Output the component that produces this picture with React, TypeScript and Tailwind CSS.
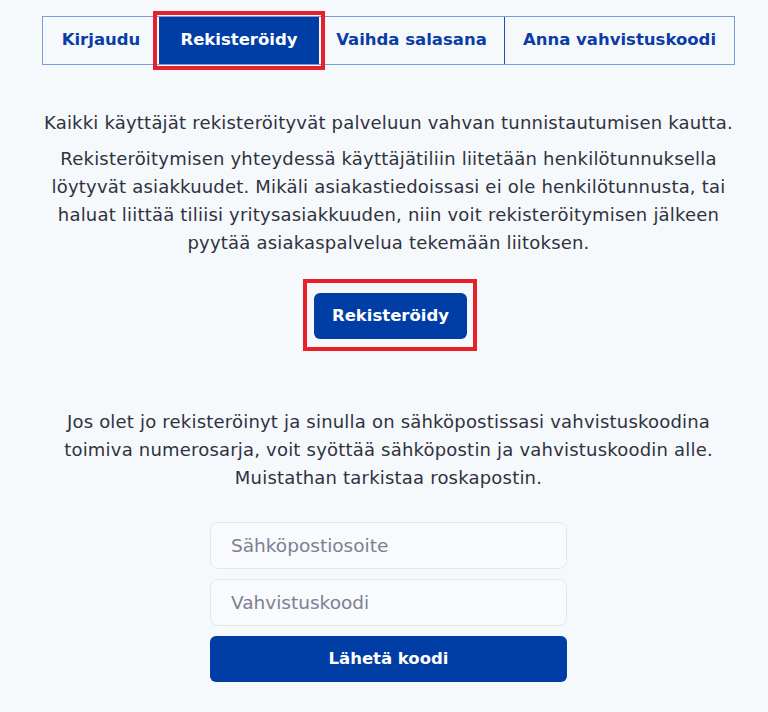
import React from "react";

const font = { fontFamily: '"DejaVu Sans", "Noto Sans", sans-serif' };

export default function App() {
  return (
    <div className="min-h-[712px] w-[768px] bg-[#f6f9fc] text-[#2f3240]" style={font}>
      <div className="flex flex-col items-center pl-[9px] pt-[16px]">
        <div className="flex h-[49px] w-[693px] border border-[#7d9ada]">
          <div className="flex w-[116px] items-center justify-center text-[16.5px] font-bold text-[#0b3da6]">
            Kirjaudu
          </div>
          <div className="flex w-[160px] items-center justify-center bg-[#003ea6] text-[16.5px] font-bold text-white outline-4 outline-offset-2 outline-[#e8202a]">
            Rekisteröidy
          </div>
          <div className="flex w-[186px] items-center justify-center border-r border-[#1f4fb8] text-[16.5px] font-bold text-[#0b3da6]">
            Vaihda salasana
          </div>
          <div className="flex flex-1 items-center justify-center text-[16.5px] font-bold text-[#0b3da6]">
            Anna vahvistuskoodi
          </div>
        </div>

        <p className="mt-[44px] text-center text-[18px] leading-[28px] tracking-[0.2px]">
          Kaikki käyttäjät rekisteröityvät palveluun vahvan tunnistautumisen kautta.
        </p>
        <p className="mt-[8px] text-center text-[18px] leading-[28px] tracking-[0.2px]">
          Rekisteröitymisen yhteydessä käyttäjätiliin liitetään henkilötunnuksella
          <br />
          löytyvät asiakkuudet. Mikäli asiakastiedoissasi ei ole henkilötunnusta, tai
          <br />
          haluat liittää tiliisi yritysasiakkuuden, niin voit rekisteröitymisen jälkeen
          <br />
          pyytää asiakaspalvelua tekemään liitoksen.
        </p>

        <div className="ml-[3px] mt-[22px] border-4 border-[#e8202a] pb-[8px] pl-[7px] pr-[6px] pt-[10px]">
          <button
            className="flex h-[46px] w-[153px] items-center justify-center rounded-[6px] bg-[#003ea6] text-[16.5px] font-bold text-white"
            style={font}
          >
            Rekisteröidy
          </button>
        </div>

        <p className="mt-[57px] text-center text-[18px] leading-[28px] tracking-[0.2px]">
          Jos olet jo rekisteröinyt ja sinulla on sähköpostissasi vahvistuskoodina
          <br />
          toimiva numerosarja, voit syöttää sähköpostin ja vahvistuskoodin alle.
          <br />
          Muistathan tarkistaa roskapostin.
        </p>

        <div className="mt-[30px] flex w-[357px] flex-col gap-[10px]">
          <input
            className="h-[47px] w-full rounded-[8px] border border-[#e4e8ee] bg-[#f8fafd] px-[20px] text-[18.5px] placeholder:text-[#7b8191] outline-none"
            style={font}
            placeholder="Sähköpostiosoite"
          />
          <input
            className="h-[47px] w-full rounded-[8px] border border-[#e4e8ee] bg-[#f8fafd] px-[20px] text-[18.5px] placeholder:text-[#7b8191] outline-none"
            style={font}
            placeholder="Vahvistuskoodi"
          />
          <button
            className="flex h-[46px] w-full items-center justify-center rounded-[6px] bg-[#003ea6] text-[16.5px] font-bold text-white"
            style={font}
          >
            Lähetä koodi
          </button>
        </div>
      </div>
    </div>
  );
}
